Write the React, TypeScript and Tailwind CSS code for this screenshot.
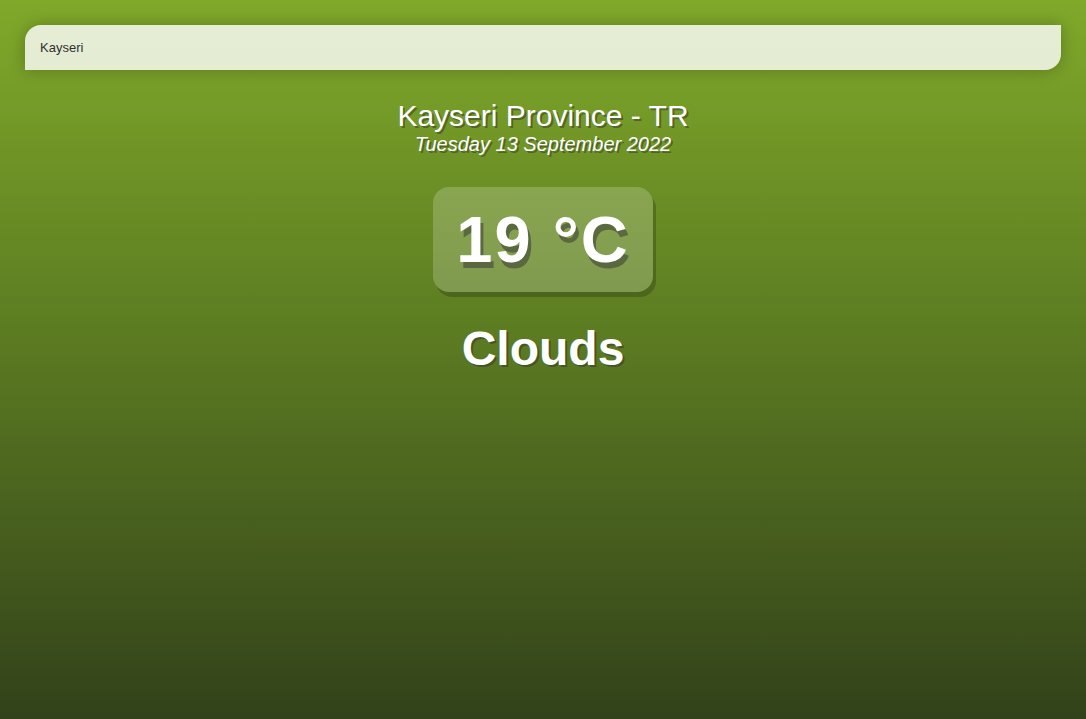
import React, { useState } from 'react';

export default function App() {
  const [query, setQuery] = useState('Kayseri');

  return (
    <div className="min-h-screen bg-[linear-gradient(to_bottom,#80a92a_0%,#5d7d22_45%,#32421a_100%)] font-['Liberation_Sans',Arial,sans-serif]">
      <main className="min-h-screen p-[25px]">
        {/* Search */}
        <div className="w-full">
          <input
            type="text"
            value={query}
            onChange={(e) => setQuery(e.target.value)}
            placeholder="Search..."
            className="block w-full h-[45px] px-[15px] text-[13px] text-[#313131] bg-white/80 border-none outline-none rounded-tl-2xl rounded-br-2xl shadow-[0_0_16px_rgba(0,0,0,0.25)]"
          />
        </div>

        {/* Location */}
        <div className="mt-[29px] text-center text-white">
          <div className="text-[30px] leading-[34px] [text-shadow:2px_2px_rgba(50,50,50,0.5)]">
            Kayseri Province - TR
          </div>
          <div className="text-[20px] leading-[23px] italic [text-shadow:2px_2px_rgba(50,50,50,0.5)]">
            Tuesday 13 September 2022
          </div>
        </div>

        {/* Weather */}
        <div className="flex flex-col items-center text-white">
          <div className="mt-[31px] w-[220px] h-[105px] flex items-center justify-center rounded-2xl bg-white/20 shadow-[3px_5px_rgba(0,0,0,0.2)] text-[65px] leading-none font-black tracking-[2px] [text-shadow:3px_6px_rgba(50,50,50,0.5)]">
            19 °C
          </div>
          <div className="mt-[29px] text-[48px] leading-[55px] font-bold [text-shadow:2px_2px_rgba(50,50,50,0.5)]">
            Clouds
          </div>
        </div>
      </main>
    </div>
  );
}
